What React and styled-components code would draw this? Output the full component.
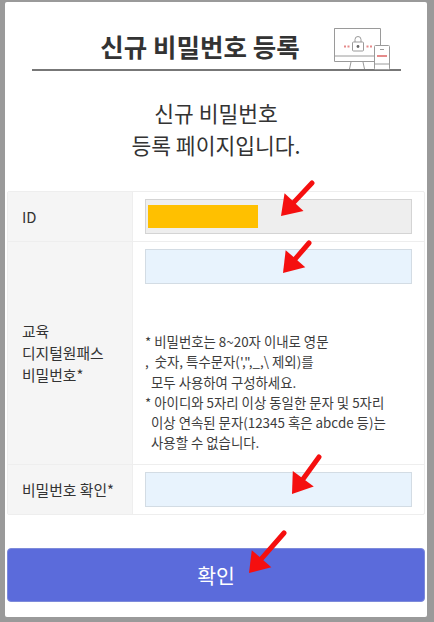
import React from "react";
import styled, { createGlobalStyle } from "styled-components";

const GlobalStyle = createGlobalStyle`
  html, body {
    margin: 0;
    padding: 0;
    background: #9a9a9a;
  }
  * {
    box-sizing: border-box;
  }
`;

const Frame = styled.div`
  position: relative;
  width: 434px;
  height: 622px;
  padding: 2px 7px 5px 5px;
  background: #9a9a9a;
  overflow: hidden;
  font-family: "Noto Sans CJK KR", "Noto Sans", sans-serif;
`;

const Panel = styled.main`
  height: 100%;
  padding: 0 2px;
  background: #fff;
  border-radius: 2px;
  display: flex;
  flex-direction: column;
`;

const Header = styled.header`
  position: relative;
  height: 69px;
  margin: 0 24px 0 25px;
  border-bottom: 2px solid #777;
  display: flex;
  justify-content: center;
`;

const Title = styled.h1`
  margin: 0 0 0 -33px;
  padding-top: 26px;
  font-size: 25.5px;
  line-height: 36px;
  font-weight: 700;
  color: #333;
`;

const DeviceIcon = styled.svg`
  position: absolute;
  right: 11px;
  bottom: -1px;
  width: 57px;
  height: 43px;
`;

const Intro = styled.p`
  margin: 0;
  padding-top: 26px;
  height: 120px;
  text-align: center;
  font-size: 21.5px;
  line-height: 32px;
  font-weight: 400;
  color: #333;
`;

const Table = styled.section`
  border: 1px solid #eee;
  border-radius: 2px;
`;

const Row = styled.div`
  display: flex;
  min-height: ${({ $height }) => $height}px;
  & + & {
    border-top: 1px solid #eee;
  }
`;

const Label = styled.div`
  width: 125px;
  flex: none;
  padding-left: 14px;
  display: flex;
  align-items: center;
  background: #f5f5f5;
  border-right: 1px solid #eee;
  font-size: 14.8px;
  line-height: 22px;
  color: #333;
`;

const Cell = styled.div`
  flex: 1;
  padding: 7px 12px 0 12px;
`;

const Input = styled.div`
  height: 35px;
  padding: 5px 2px;
  background: ${({ $readOnly }) => ($readOnly ? "#eeeeee" : "#e8f3fd")};
  border: 1px solid ${({ $readOnly }) => ($readOnly ? "#d4d4d4" : "#d3dce4")};
`;

const Masked = styled.div`
  width: 110px;
  height: 23px;
  background: #ffc000;
`;

const Notes = styled.div`
  margin-top: 47px;
  font-size: 13.4px;
  line-height: 20.3px;
  color: #3c3c3c;
  white-space: pre;
`;

const SubmitButton = styled.button`
  margin-top: 33px;
  height: 54px;
  border: 1px solid #7d8ada;
  border-radius: 4px;
  background: #5b6bdb;
  color: #fff;
  font-family: inherit;
  font-size: 20.5px;
  padding: 0;
`;

const ArrowMark = styled.svg`
  position: absolute;
  left: ${({ $left }) => $left}px;
  top: ${({ $top }) => $top}px;
  pointer-events: none;
`;

// tail is the upper right end, the head sits at the lower left
const Arrow = ({ left, top, w, h }) => {
  const len = Math.hypot(w - 3, h - 3);
  const ux = (w - 3) / len;
  const uy = (h - 3) / len;
  const hx = 2;
  const hy = h - 1;
  const bx = hx + ux * 19;
  const by = hy - uy * 19;
  const px = uy * 13;
  const py = ux * 13;
  return (
    <ArrowMark $left={left} $top={top} width={w + 2} height={h + 2}>
      <line x1={w - 2} y1={3} x2={bx} y2={by} stroke="#f50f0f" strokeWidth="5" strokeLinecap="round" />
      <polygon
        points={`${hx},${hy} ${bx - px},${by - py} ${bx + px},${by + py}`}
        fill="#f50f0f"
      />
    </ArrowMark>
  );
};

const Devices = () => (
  <DeviceIcon viewBox="0 0 57 43" fill="none">
    <g stroke="#9a9a9a" strokeWidth="1">
      <path d="M41 1.5H1.5V34.5H41" />
      <path d="M47.5 1.5V18" />
      <path d="M1.5 1.5H47.5" />
      <path d="M1.5 29H41" />
      <path d="M18 35L16.5 42M30 35L31.5 42" />
      <rect x="41.5" y="18.5" width="15" height="24" rx="1" fill="#fff" />
      <path d="M41.5 37H56.5" />
      <path d="M47 22.5H51" />
      <rect x="19.5" y="15" width="11" height="9" rx="1" />
      <path d="M22 15V12.5a3 3 0 0 1 6 0V15" />
    </g>
    <circle cx="25" cy="19.5" r="1.4" fill="#666" />
    <g fill="#e58a8a">
      <rect x="11" y="18.5" width="2" height="2" />
      <rect x="14.5" y="18.5" width="2" height="2" />
      <rect x="33.5" y="18.5" width="2" height="2" />
      <rect x="37" y="18.5" width="2" height="2" />
      <rect x="44" y="28" width="10" height="2" />
    </g>
  </DeviceIcon>
);

const App = () => {
  return (
    <>
      <GlobalStyle />
      <Frame>
        <Panel>
          <Header>
            <Title>신규 비밀번호 등록</Title>
            <Devices />
          </Header>
          <Intro>
            신규 비밀번호
            <br />
            등록 페이지입니다.
          </Intro>
          <Table>
            <Row $height={49}>
              <Label>ID</Label>
              <Cell>
                <Input $readOnly>
                  <Masked />
                </Input>
              </Cell>
            </Row>
            <Row $height={223}>
              <Label>
                <div>
                  교육
                  <br />
                  디지털원패스
                  <br />
                  비밀번호*
                </div>
              </Label>
              <Cell>
                <Input />
                <Notes>
                  {"* 비밀번호는 8~20자 이내로 영문\n,  숫자, 특수문자(',\",_,\\ 제외)를\n  모두 사용하여 구성하세요.\n* 아이디와 5자리 이상 동일한 문자 및 5자리\n  이상 연속된 문자(12345 혹은 abcde 등)는\n  사용할 수 없습니다."}
                </Notes>
              </Cell>
            </Row>
            <Row $height={50}>
              <Label>비밀번호 확인*</Label>
              <Cell>
                <Input />
              </Cell>
            </Row>
          </Table>
          <SubmitButton>확인</SubmitButton>
        </Panel>
        <Arrow left={279} top={180} w={35} h={37} />
        <Arrow left={281} top={240} w={30} h={34} />
        <Arrow left={290} top={454} w={31} h={41} />
        <Arrow left={247} top={530} w={39} h={44} />
      </Frame>
    </>
  );
};

export default App;
